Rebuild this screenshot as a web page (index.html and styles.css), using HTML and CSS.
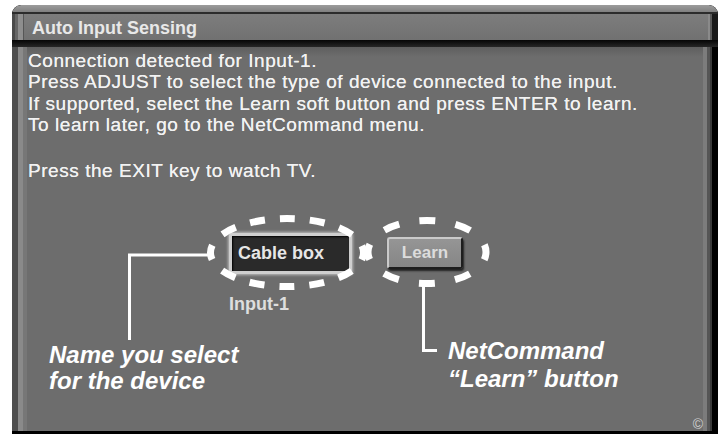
FILE: index.html
```html
<!doctype html>
<html>
<head>
  <title>Auto Input Sensing</title>
  <link rel="stylesheet" href="styles.css">
</head>
<body>
  <div class="screen">
    <div class="titlebar">
      <div class="titlebar-top"></div>
      <div class="titlebar-bar">Auto Input Sensing</div>
      <div class="titlebar-shadow"></div>
    </div>

    <div class="panel">
      <div class="msg">
        <p>Connection detected for Input-1.<br>
        Press ADJUST to select the type of device connected to the input.<br>
        If supported, select the Learn soft button and press ENTER to learn.<br>
        To learn later, go to the NetCommand menu.</p>
        <p class="exit">Press the EXIT key to watch TV.</p>
      </div>

      <div class="figure">
        <div class="devslot">
          <div class="btn-device">Cable box</div>
          <div class="input-label">Input-1</div>
        </div>
        <div class="btn-learn">Learn</div>
      </div>

      <span class="copy">&copy;</span>
    </div>

    <!-- callout marks, drawn in page coordinates -->
    <svg class="marks" viewBox="12 5 706 429" width="706" height="429">
      <g fill="none" stroke="#fff">
        <ellipse cx="287" cy="252.6" rx="76.5" ry="34" stroke-width="7" stroke-dasharray="15 15" stroke-dashoffset="7.5"/>
        <ellipse cx="427" cy="252" rx="59" ry="31.5" stroke-width="7" stroke-dasharray="16 20.36" stroke-dashoffset="8"/>
        <polyline points="208,255 129.5,255 129.5,340" stroke-width="3"/>
        <polyline points="423.5,284 423.5,350.5 437,350.5" stroke-width="3"/>
      </g>
    </svg>
    <div class="caption caption-name">Name you select<br>for the device</div>
    <div class="caption caption-learn">NetCommand<br>&ldquo;Learn&rdquo; button</div>
  </div>
</body>
</html>
```

FILE: styles.css
```css
body {
  margin: 0;
  background: #fff;
  font-family: "Liberation Sans", Arial, sans-serif;
}

.screen {
  position: relative;
  margin: 5px 0 0 12px;
  width: 706px;
  height: 429px;
  display: flex;
  flex-direction: column;
  background: #000;
  border-radius: 9px 9px 0 0;
}

/* title bar */
.titlebar {
  height: 42px;
  display: flex;
  flex-direction: column;
  border-radius: 9px 9px 0 0;
  overflow: hidden;
}
.titlebar-top {
  height: 7px;
  background: linear-gradient(#9c9c9c, #808080);
  border-radius: 9px 9px 0 0;
  border-bottom: 2px solid #2c2c2c;
}
.titlebar-bar {
  height: 26px;
  padding-left: 20px;
  line-height: 28px;
  font-size: 18px;
  font-weight: bold;
  color: #e8e8e8;
  background:
    linear-gradient(to right, #4a4a4a 0 3px, #666 3px 6px, #8e8e8e 6px 11px, #565656 11px 12px, transparent 12px),
    linear-gradient(to left, #1a1a1a 0 6px, #5a5a5a 6px 8px, #8a8a8a 8px 10px, transparent 10px),
    linear-gradient(#7d7d7d, #717171);
}
.titlebar-shadow {
  flex: 1;
  background: linear-gradient(#050505, #262626);
}

/* main panel */
.panel {
  flex: 1;
  display: flex;
  flex-direction: column;
  padding: 3px 15px 0 16px;
  border-bottom: 3px solid #000;
  background:
    linear-gradient(to right, #4e4e4e 0 6px, #8a8a8a 6px 11px, #777 11px 15px, transparent 15px),
    linear-gradient(to left, #000 0 6px, #3a3a3a 6px 8px, #555 8px 11px, #7c7c7c 11px 15px, transparent 15px),
    linear-gradient(#5e5e5e, #6d6d6d 10px);
}

.msg p {
  margin: 0;
  font-size: 19px;
  letter-spacing: 0.55px;
  line-height: 21.3px;
  color: #f2f2f2;
  text-shadow: 0 0 0.4px #f2f2f2;
}
.msg .exit {
  margin-top: 25.3px;
}

.figure {
  display: flex;
  align-items: flex-start;
  gap: 35px;
  margin-top: 51px;
  padding-left: 201px;
}
.devslot {
  display: flex;
  flex-direction: column;
  align-items: flex-start;
}
.btn-device {
  width: 117px;
  height: 35px;
  border: 3px solid #cfcfcf;
  border-radius: 3px;
  background: #2a2a2a;
  box-shadow: 0 0 3px 1px rgba(255, 255, 255, .55), inset 1px 1px 2px #000;
  color: #e6e6e6;
  font-size: 18px;
  font-weight: bold;
  line-height: 35px;
  text-indent: 6px;
}
.input-label {
  margin-top: 20px;
  font-size: 18px;
  font-weight: bold;
  line-height: 20px;
  color: #dedede;
}
.btn-learn {
  margin-top: 4px;
  width: 72px;
  height: 28px;
  border: 2px solid;
  border-color: #cacaca #1e1e1e #1e1e1e #cacaca;
  border-radius: 3px;
  background: linear-gradient(#959595, #868686);
  box-shadow: 1px 2px 2px #222;
  color: #dcdcdc;
  font-size: 17px;
  font-weight: bold;
  line-height: 28px;
  text-align: center;
}

.copy {
  margin-top: auto;
  align-self: flex-end;
  font-size: 14px;
  line-height: 14px;
  color: #d0d0d0;
}

/* callouts laid over the panel */
.marks {
  position: absolute;
  left: 0;
  top: 0;
}
.caption {
  position: absolute;
  font-size: 24px;
  font-weight: bold;
  font-style: italic;
  color: #fff;
}
.caption-name {
  left: 37px;
  top: 337px;
  line-height: 26px;
}
.caption-learn {
  left: 436px;
  top: 332px;
  line-height: 28px;
}
```
